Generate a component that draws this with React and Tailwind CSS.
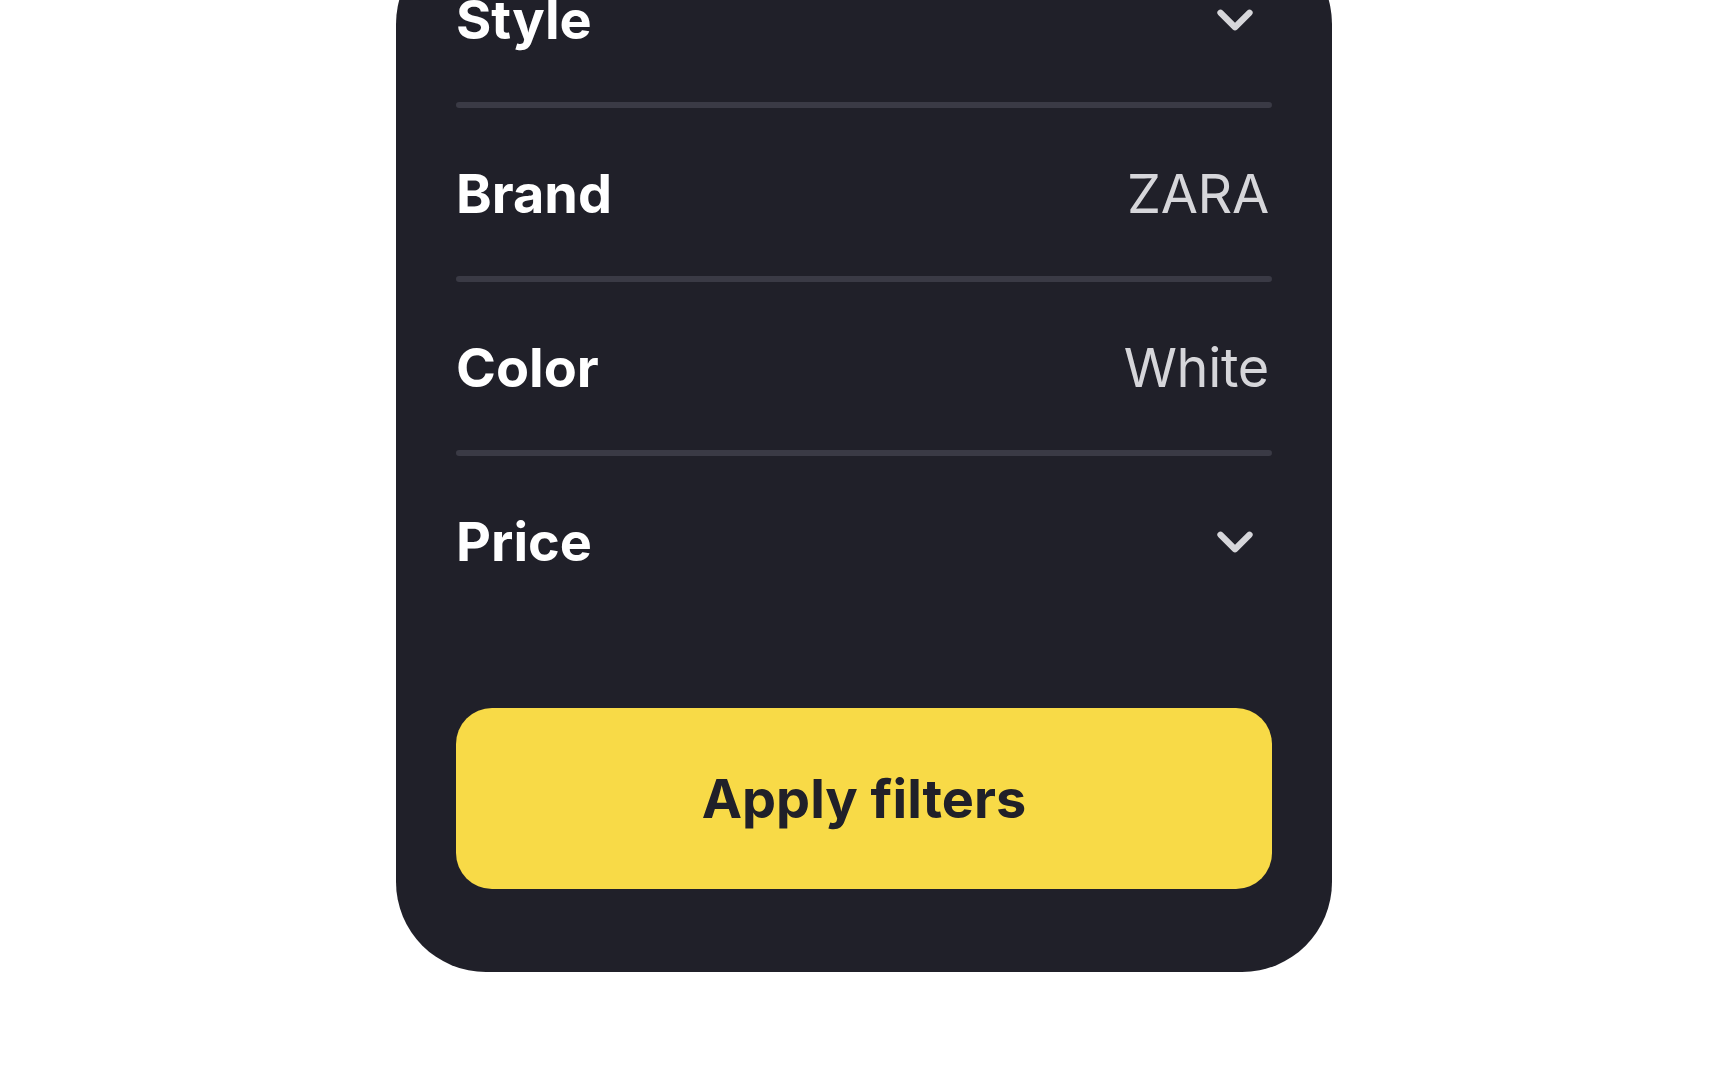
import React from 'react'
import { ChevronDown } from 'lucide-react'

const ROWS = [
  { label: 'Style',  chevron: true },
  { label: 'Brand',  value: 'ZARA' },
  { label: 'Color',  value: 'White' },
  { label: 'Price',  chevron: true },
]

function FilterRow({ label, value, chevron }) {
  return (
    <div className="h-[168px] pt-[4px] flex items-center justify-between">
      <span className="text-[54px] font-bold text-white leading-none">{label}</span>
      {chevron ? (
        <ChevronDown size={58} strokeWidth={2.6} className="text-[#d6d6da] mr-[8px]" />
      ) : (
        <span className="text-[54px] font-normal text-[#d6d6da] leading-none tracking-[-0.3px] mr-[3px]">{value}</span>
      )}
    </div>
  )
}

export default function App() {
  return (
    <div className="min-h-screen bg-white flex justify-center" style={{ fontFamily: 'Inter, "Noto Sans", sans-serif' }}>
      <div className="w-[936px] -mt-[66px] mb-[109px] bg-[#202029] rounded-[90px] px-[60px] pb-[83px] flex flex-col">
        {ROWS.map((row, i) => (
          <React.Fragment key={row.label}>
            <FilterRow {...row} />
            {i < ROWS.length - 1 && <div className="h-[6px] rounded-full bg-[#3a3a45]" />}
          </React.Fragment>
        ))}

        {/* Apply button */}
        <button className="mt-[84px] h-[181px] rounded-[36px] bg-[#f8da47] text-[#202029] text-[54px] font-bold">
          Apply filters
        </button>
      </div>
    </div>
  )
}
